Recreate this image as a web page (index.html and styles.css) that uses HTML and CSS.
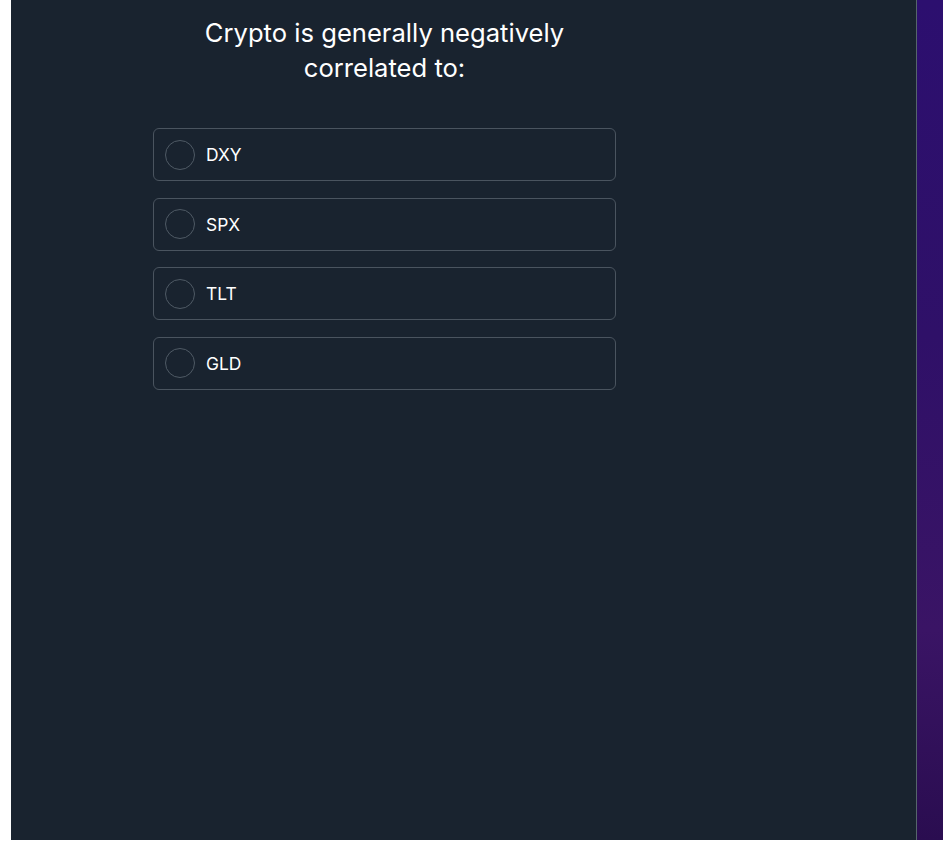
FILE: index.html
```html
<!DOCTYPE html>
<html>
<head>
<meta charset="utf-8">
<link rel="stylesheet" href="styles.css">
</head>
<body>
<div class="frame">
  <main class="panel">
    <div class="quiz">
      <h1 class="question">Crypto is generally negatively correlated to:</h1>
      <div class="options">
        <label class="option"><span class="radio"></span><span class="label">DXY</span></label>
        <label class="option"><span class="radio"></span><span class="label">SPX</span></label>
        <label class="option"><span class="radio"></span><span class="label">TLT</span></label>
        <label class="option"><span class="radio"></span><span class="label">GLD</span></label>
      </div>
    </div>
  </main>
  <aside class="strip"></aside>
</div>
</body>
</html>
```
FILE: styles.css
```css
html, body {
  margin: 0;
  padding: 0;
  background: #ffffff;
  font-family: Inter, "Noto Sans", sans-serif;
}
.frame {
  display: flex;
  height: 840px;
  padding-left: 11px;
  width: 932px;
}
.panel {
  flex: 1;
  background: #19232f;
  border-right: 1px solid #56656b;
}
.strip {
  width: 26px;
  background: linear-gradient(180deg, #2c0f6f 0%, #2f1068 40%, #3a1465 75%, #2a0d50 100%);
}
.quiz {
  width: 463px;
  margin-left: 142px;
  padding-top: 15px;
}
.question {
  margin: 0 auto;
  width: 380px;
  text-align: center;
  color: #ffffff;
  font-size: 25.6px;
  font-weight: 400;
  line-height: 35px;
}
.options {
  margin-top: 43px;
  display: flex;
  flex-direction: column;
  gap: 16.5px;
}
.option {
  display: flex;
  align-items: center;
  height: 51px;
  border: 1px solid #4a545f;
  border-radius: 6px;
  padding-left: 11px;
  gap: 11px;
}
.radio {
  width: 30px;
  height: 30px;
  border: 1px solid #4f5a65;
  border-radius: 50%;
  box-sizing: border-box;
}
.label {
  color: #ffffff;
  font-size: 17.4px;
}
```
